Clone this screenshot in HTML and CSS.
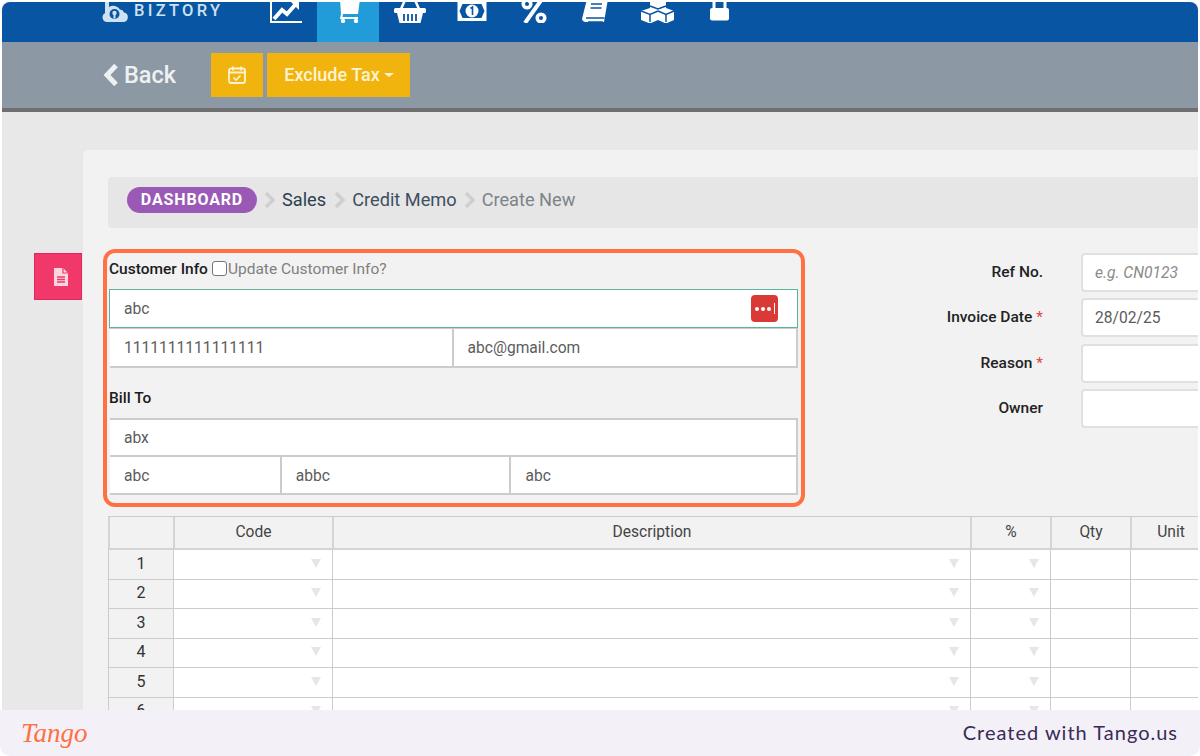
FILE: index.html
```html
<!DOCTYPE html>
<html lang="en">
<head>
<meta charset="utf-8">
<title>Credit Memo</title>
<link rel="stylesheet" href="styles.css">
</head>
<body>
<div class="frame">
  <header class="topbar">
    <div class="brand">
      <svg class="brand-mark" viewBox="0 0 26 22" width="26" height="22"><path fill="#cfe2f2" d="M3 0h4v7a8 8 0 0 1 11 2.500 4.500 4.500 0 0 1 4 3 4.800 4.800 0 0 1-1 9.500H5a4.800 4.800 0 0 1-2-9z"/><circle cx="12.500" cy="14" r="5" fill="#0855a3"/><circle cx="12.500" cy="13" r="2.200" fill="#cfe2f2"/><rect x="11.500" y="13.500" width="2" height="5" fill="#cfe2f2"/></svg>
      <span class="brand-name">BIZTORY</span>
    </div>
    <nav class="nav">
      <a class="nav-item"><svg class="nav-icon" viewBox="0 0 32 32"><path d="M1 8v23h31" fill="none" stroke="#fff" stroke-width="2"/><path d="M4 28l8-9 5 4 8-9" fill="none" stroke="#fff" stroke-width="4"/><path d="M21 11h8v8z" fill="#fff"/></svg></a>
      <a class="nav-item nav-item-active"><svg class="nav-icon" viewBox="0 0 32 32"><path fill="#fff" d="M8 8h20l-2 15H11l-.5 3H26v2H8l1-5z"/><circle cx="11" cy="30" r="2.200" fill="#fff"/><circle cx="24" cy="30" r="2.200" fill="#fff"/></svg></a>
      <a class="nav-item"><svg class="nav-icon" viewBox="0 0 32 32"><path d="M7 18l4-9M25 18l-4-9" stroke="#fff" stroke-width="2.500"/><rect x="0" y="17" width="32" height="5" rx="1.500" fill="#fff"/><path fill="#fff" d="M3 22h26l-2.500 10h-21z"/><path d="M10 23v7M14 23v7M18 23v7M22 23v7" stroke="#0855a3" stroke-width="1.800"/></svg></a>
      <a class="nav-item"><svg class="nav-icon" viewBox="0.5 0 32 32"><rect x="2" y="10" width="29" height="20" fill="#fff"/><path fill="#0855a3" d="M4 20l3-7h19l3 7-3 7H7z"/><circle cx="16.500" cy="20" r="6.500" fill="#fff"/><path d="M15 17.500l2-1.500v8" fill="none" stroke="#0855a3" stroke-width="1.600"/></svg></a>
      <a class="nav-item"><svg class="nav-icon" viewBox="1 0 32 32"><circle cx="10" cy="13" r="3.800" fill="none" stroke="#fff" stroke-width="3.500"/><circle cx="24" cy="27" r="3.800" fill="none" stroke="#fff" stroke-width="3.500"/><path d="M25 8L8 32" stroke="#fff" stroke-width="4"/></svg></a>
      <a class="nav-item"><svg class="nav-icon" viewBox="1 0 32 32"><path fill="#fff" d="M8 8h21l-4 23H6a3.500 3.500 0 0 1-3-3z"/><path d="M7 27h18.500M9 31h15" fill="none" stroke="#0855a3" stroke-width="1.500"/><path d="M12 13h11M11.500 17h11" stroke="#0855a3" stroke-width="1.600"/></svg></a>
      <a class="nav-item"><svg class="nav-icon nav-icon-wide" viewBox="2 0 34 32"><path fill="#fff" d="M19 4l8 3v10l-8 3-8-3V7zM11 17l8 3v9l-8 3.500-9-3.500v-9zM27 17l8 3v9l-8 3.500-8-3.500v-9z"/><path d="M11 15l8 3 8-3M2 20l9 3.500 8-3.500M19 20l8 3.500 8-3.500M11 24v7M27 24v7" fill="none" stroke="#0855a3" stroke-width="1.500"/></svg></a>
      <a class="nav-item"><svg class="nav-icon" viewBox="2 0 32 32"><path d="M12 18v-6a5.500 5.500 0 0 1 11 0v6" fill="none" stroke="#fff" stroke-width="3"/><rect x="8" y="17" width="19" height="12.500" rx="2" fill="#fff"/></svg></a>
    </nav>
  </header>

  <div class="toolbar">
    <a class="back"><svg class="back-icon" viewBox="0 0 16 22" width="16" height="22"><path d="M13 1.500L4 11l9 9.500" fill="none" stroke="#eef1f3" stroke-width="5"/></svg>Back</a>
    <button class="tool-btn tool-btn-icon"><svg viewBox="0 0 20 20" width="20" height="20"><rect x="2" y="3.500" width="16" height="14.500" rx="2" fill="none" stroke="#fdf3d3" stroke-width="1.800"/><path d="M2 7.500h16M6 1.500v4M14 1.500v4" stroke="#fdf3d3" stroke-width="1.800"/><path d="M6.500 12.500l2.500 2.500 4.500-4.500" fill="none" stroke="#fdf3d3" stroke-width="1.600"/></svg></button>
    <button class="tool-btn tool-btn-text">Exclude Tax<span class="caret"></span></button>
  </div>

  <main class="content">
    <section class="card">
      <a class="side-tab"><svg viewBox="0 0 18 20" width="18" height="20"><path d="M2 1h9l5 5v13H2z" fill="#fbd5df"/><path d="M11 1v5h5" fill="none" stroke="#f0386b" stroke-width="1.200"/><path d="M5 10h8M5 12.500h8M5 15h8" stroke="#f0386b" stroke-width="1.300"/></svg></a>

      <nav class="crumbs">
        <span class="pill">DASHBOARD</span>
        <svg class="crumb-sep" viewBox="0 0 14 18" width="14" height="18"><path d="M3 2l7 7-7 7" fill="none" stroke="#cfcfcf" stroke-width="3.500"/></svg>
        <span class="crumb crumb-dark">Sales</span>
        <svg class="crumb-sep" viewBox="0 0 14 18" width="14" height="18"><path d="M3 2l7 7-7 7" fill="none" stroke="#cfcfcf" stroke-width="3.500"/></svg>
        <span class="crumb crumb-mid">Credit Memo</span>
        <svg class="crumb-sep" viewBox="0 0 14 18" width="14" height="18"><path d="M3 2l7 7-7 7" fill="none" stroke="#cfcfcf" stroke-width="3.500"/></svg>
        <span class="crumb crumb-light">Create New</span>
      </nav>

      <div class="form-top">
        <div class="customer">
          <div class="customer-head">
            <span class="label-strong">Customer Info</span>
            <span class="check"></span>
            <span class="update">Update Customer Info?</span>
          </div>
          <div class="field field-focus">
            <span>abc</span>
            <span class="dots"><i></i><i></i><i></i><b></b></span>
          </div>
          <div class="field-row">
            <div class="field field-half-a">1111111111111111</div>
            <div class="field field-half-b">abc@gmail.com</div>
          </div>
          <div class="bill-head"><span class="label-strong">Bill To</span></div>
          <div class="field field-plain">abx</div>
          <div class="field-row">
            <div class="field field-a">abc</div>
            <div class="field field-b">abbc</div>
            <div class="field field-c">abc</div>
          </div>
        </div>

        <div class="meta">
          <label class="meta-label">Ref No.</label>
          <div class="meta-input meta-placeholder">e.g. CN0123</div>
          <label class="meta-label">Invoice Date <em>*</em></label>
          <div class="meta-input">28/02/25</div>
          <label class="meta-label">Reason <em>*</em></label>
          <div class="meta-input"></div>
          <label class="meta-label">Owner</label>
          <div class="meta-input"></div>
        </div>
      </div>

      <div class="grid">
        <div class="th"></div><div class="th">Code</div><div class="th">Description</div><div class="th">%</div><div class="th">Qty</div><div class="th">Unit</div>

        <div class="num">1</div><div class="td dd"></div><div class="td dd"></div><div class="td dd"></div><div class="td"></div><div class="td"></div>
        <div class="num">2</div><div class="td dd"></div><div class="td dd"></div><div class="td dd"></div><div class="td"></div><div class="td"></div>
        <div class="num">3</div><div class="td dd"></div><div class="td dd"></div><div class="td dd"></div><div class="td"></div><div class="td"></div>
        <div class="num">4</div><div class="td dd"></div><div class="td dd"></div><div class="td dd"></div><div class="td"></div><div class="td"></div>
        <div class="num">5</div><div class="td dd"></div><div class="td dd"></div><div class="td dd"></div><div class="td"></div><div class="td"></div>
        <div class="num">6</div><div class="td dd"></div><div class="td dd"></div><div class="td dd"></div><div class="td"></div><div class="td"></div>
      </div>
    </section>
  </main>
</div>
<footer class="tango">
  <span class="tango-logo">Tango</span>
  <span class="tango-credit">Created with Tango.us</span>
</footer>
</body>
</html>
```
FILE: styles.css
```css
* { box-sizing: border-box; }
html, body { margin: 0; padding: 0; height: 756px; overflow: hidden; background: #fff; }
body { font-family: Roboto, "Liberation Sans", sans-serif; font-size: 15.600px; color: #555; }

.frame {
  margin: 2px 2px 0;
  height: 708px;
  display: flex;
  flex-direction: column;
  overflow: hidden;
  border-radius: 8px 8px 0 0;
  background: #e8e8e8;
}

.topbar { flex: 0 0 40px; display: flex; padding-left: 100px; background: #0855a3; overflow: hidden; }
.brand { width: 153px; display: flex; align-items: flex-end; padding-bottom: 20px; }
.brand-mark { flex: none; }
.brand-name { margin: 0 0 3px 6px; font-size: 16.500px; font-weight: 500; letter-spacing: 3.300px; line-height: 16px; color: #cfe2f2; }
.nav { display: flex; }
.nav-item { width: 62px; height: 40px; display: flex; align-items: flex-end; justify-content: center; padding-bottom: 19px; }
.nav-item-active { background: #219cd9; }
.nav-icon { width: 32px; height: 32px; flex: none; }
.nav-icon-wide { width: 34px; }

.toolbar { flex: 0 0 70px; display: flex; align-items: flex-start; padding: 11px 0 0 101px; background: #8c98a3; border-bottom: 4px solid #6f6f6f; }
.back { width: 108px; height: 44px; display: flex; align-items: center; font-size: 23.500px; font-weight: 500; color: #eef1f3; }
.back-icon { margin-right: 5px; }
.tool-btn { height: 44px; border: 0; padding: 0; display: flex; align-items: center; justify-content: center; background: #f1b30d; color: #fdf3d3; font-family: inherit; }
.tool-btn-icon { width: 52px; margin-right: 4px; }
.tool-btn-text { width: 143px; padding: 0 0 2px 1px; font-size: 18px; font-weight: 500; }
.caret { margin: 2px 0 0 4px; border-left: 5px solid transparent; border-right: 5px solid transparent; border-top: 4px solid #fdf3d3; }

.content { flex: 1; min-height: 0; padding: 38px 0 0 81px; }
.card { position: relative; height: 640px; padding: 27px 0 0 25px; background: #f2f2f2; border-radius: 5px 0 0 0; }
.side-tab { position: absolute; left: -49px; top: 103px; width: 48px; height: 47px; display: flex; align-items: center; justify-content: center; padding-left: 6px; background: #f0386b; border: 1px solid #e6255c; }

.crumbs { height: 51px; display: flex; align-items: center; padding: 0 0 6px 19px; background: #e6e6e6; border-radius: 4px 0 0 4px; font-size: 18.200px; }
.pill { width: 130px; height: 26px; display: flex; align-items: center; justify-content: center; border-radius: 13px; background: #9b59b6; color: #fff; font-size: 16px; font-weight: 700; letter-spacing: .85px; }
.crumb-sep { margin: 0 5px 0 6px; }
.crumb-dark { color: #2c3e50; margin-right: 1px; }
.crumb-mid { color: #3f4f5f; }
.crumb-light { color: #7d8387; }

.form-top { display: flex; margin-top: 21px; }
.customer { width: 702px; height: 258px; margin-left: -5px; padding: 0 3px 0 2px; border: 4px solid #ff7043; border-radius: 12px; }
.customer-head { height: 36px; display: flex; align-items: center; padding-bottom: 4px; }
.label-strong { font-size: 15.500px; font-weight: 500; color: #1c1c1c; }
.check { width: 15px; height: 15px; margin: -2px 1px 0 4px; background: #fff; border: 1px solid #767676; border-radius: 3px; }
.update { font-size: 15.500px; color: #808080; }

.field { height: 39px; display: flex; align-items: center; padding-left: 14px; background: #fff; border-right: 2px solid #ccc; border-bottom: 2px solid #ccc; color: #5c5c5c; }
.field-focus { height: 39px; justify-content: space-between; padding-right: 19px; border: 1px solid #5ab5a0; box-shadow: 0 1px 0 #ccc; }
.field-plain { margin-left: 1px; border-top: 2px solid #ccc; }
.field-row { display: flex; padding-left: 1px; }
.field-half-a { width: 344px; }
.field-half-b { width: 345px; }
.field-a { width: 172px; }
.field-b { width: 230px; }
.field-c { width: 287px; }
.field-row:nth-child(3) { margin-top: 1px; height: 38px; }
.bill-head { height: 51px; display: flex; align-items: flex-end; padding-bottom: 11px; }
.field-row:last-child .field { height: 38px; padding-top: 1px; }

.dots { width: 27px; height: 27px; display: flex; align-items: center; justify-content: center; gap: 2px; background: #d93a36; border-radius: 4px; }
.dots i { width: 4px; height: 4px; border-radius: 50%; background: #fff; }
.dots b { width: 1px; height: 11px; margin-left: 1px; background: #fff; }

.meta { display: grid; grid-template-columns: 238px 200px; grid-auto-rows: 39px; row-gap: 6.330px; column-gap: 38px; margin-top: 4px; align-content: start; flex: none; }
.meta-label { display: flex; align-items: center; justify-content: flex-end; gap: 4px; padding-bottom: 1px; font-size: 15.500px; font-weight: 500; color: #222; }
.meta-input { display: flex; align-items: center; padding-left: 12px; background: #fff; border: 2px solid #e0e0e0; border-radius: 4px; color: #5c5c5c; }
.meta-label em { font-style: normal; font-weight: 400; color: #e0443c; }
.meta-placeholder { font-style: italic; color: #8a8a8a; }

.grid { display: grid; grid-template-columns: 65px 159px 638px 80px 80px 80px; grid-template-rows: 33px; grid-auto-rows: 29.500px; margin-top: 9px; border-top: 1px solid #ccc; }
.th { display: flex; align-items: center; justify-content: center; padding-bottom: 2px; background: #f2f2f2; border-left: 2px solid #d4d4d4; border-bottom: 2px solid #d4d4d4; color: #444; }
.num { display: flex; align-items: center; justify-content: center; padding-bottom: 2px; background: #f2f2f2; border-left: 1px solid #ccc; border-bottom: 1px solid #ccc; color: #333; font-size: 16px; }
.td { display: flex; align-items: center; justify-content: flex-end; padding: 0 11px 2px 0; background: #fff; border-left: 1px solid #ccc; border-bottom: 1px solid #ccc; }
.dd::after { content: ""; border-left: 5px solid transparent; border-right: 5px solid transparent; border-top: 9px solid #e6e6e6; }

.tango { height: 46px; display: flex; align-items: center; justify-content: space-between; padding: 0 22px 0 21px; background: #f3f1f7; border-radius: 0 0 10px 10px; }
.tango-logo { font-family: "Liberation Serif", serif; font-style: italic; font-size: 27px; line-height: 36px; color: #ff7043; }
.tango-credit { margin-bottom: 2px; font-family: Lato, "Liberation Sans", sans-serif; font-size: 20px; letter-spacing: 1px; color: #3b2a56; }
```
